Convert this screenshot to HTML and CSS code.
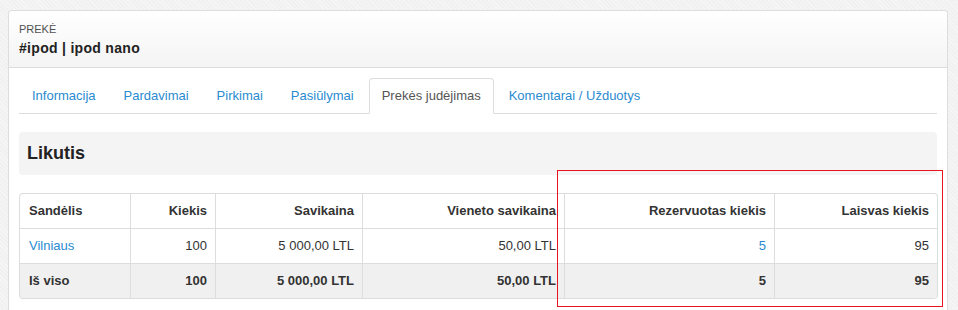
FILE: index.html
```html
<!DOCTYPE html>
<html lang="lt">

<head>
    <meta charset="UTF-8">
    <title>Prekė - ipod nano</title>
    <link rel="stylesheet" href="styles.css">
</head>

<body>
    <div class="panel">
        <div class="panel-heading">
            <div class="panel-label">Prekė</div>
            <div class="panel-title">#ipod | ipod nano</div>
        </div>
        <div class="panel-body">
            <ul class="tabs">
                <li><a href="#">Informacija</a></li>
                <li><a href="#">Pardavimai</a></li>
                <li><a href="#">Pirkimai</a></li>
                <li><a href="#">Pasiūlymai</a></li>
                <li class="active"><a href="#">Prekės judėjimas</a></li>
                <li><a href="#">Komentarai / Užduotys</a></li>
            </ul>

            <div class="well">
                <h3>Likutis</h3>
            </div>

            <table class="stock">
                <colgroup>
                    <col class="c1">
                    <col class="c2">
                    <col class="c3">
                    <col class="c4">
                    <col class="c5">
                    <col class="c6">
                </colgroup>
                <thead>
                    <tr>
                        <th>Sandėlis</th>
                        <th class="num">Kiekis</th>
                        <th class="num">Savikaina</th>
                        <th class="num">Vieneto savikaina</th>
                        <th class="num">Rezervuotas kiekis</th>
                        <th class="num">Laisvas kiekis</th>
                    </tr>
                </thead>
                <tbody>
                    <tr>
                        <td><a href="#">Vilniaus</a></td>
                        <td class="num">100</td>
                        <td class="num">5 000,00 LTL</td>
                        <td class="num">50,00 LTL</td>
                        <td class="num"><a href="#">5</a></td>
                        <td class="num">95</td>
                    </tr>
                    <tr class="total">
                        <td>Iš viso</td>
                        <td class="num">100</td>
                        <td class="num">5 000,00 LTL</td>
                        <td class="num">50,00 LTL</td>
                        <td class="num">5</td>
                        <td class="num">95</td>
                    </tr>
                </tbody>
            </table>
        </div>
    </div>

    <!-- pažymėta sritis -->
    <div class="highlight"></div>
</body>

</html>
```

FILE: styles.css
```css
body {
    margin: 10px 10px 0 8px;
    font-family: 'Liberation Sans', Arial, sans-serif;
    font-size: 13px;
    line-height: 18px;
    color: #333;
    background-color: #f1f1f1;
    background-image: repeating-linear-gradient(45deg, rgba(255, 255, 255, 0.35) 0 1px, transparent 1px 3px);
    overflow: hidden;
    height: 300px;
}

a {
    color: #2a8bd0;
    text-decoration: none;
}

.panel {
    width: 940px;
    box-sizing: border-box;
    background: #fff;
    border: 1px solid #ddd;
    border-bottom: none;
    border-radius: 4px 4px 0 0;
    height: 320px;
}

.panel-heading {
    padding: 9px 10px;
    background: linear-gradient(#ffffff, #f4f4f4);
    border-bottom: 1px solid #ddd;
    border-radius: 4px 4px 0 0;
}

.panel-label {
    font-size: 11px;
    line-height: 18px;
    text-transform: uppercase;
    color: #505050;
}

.panel-title {
    font-size: 14px;
    line-height: 20px;
    font-weight: bold;
    letter-spacing: 0.3px;
    color: #222;
}

.panel-body {
    padding: 10px;
}

.tabs {
    display: flex;
    list-style: none;
    margin: 0 0 18px;
    padding: 0;
    border-bottom: 1px solid #ddd;
}

.tabs li {
    margin-bottom: -1px;
    margin-right: 2px;
}

.tabs a {
    display: block;
    padding: 8px 12px;
    line-height: 18px;
    border: 1px solid transparent;
    border-radius: 4px 4px 0 0;
}

.tabs .active a {
    color: #555;
    background: #fff;
    border-color: #ddd #ddd transparent;
}

.well {
    background: #f4f4f4;
    border-radius: 4px;
    padding: 0 8px;
    margin-bottom: 18px;
}

.well h3 {
    margin: 0;
    font-size: 18px;
    line-height: 43px;
    color: #222;
}

.stock {
    width: 100%;
    table-layout: fixed;
    border-collapse: separate;
    border-spacing: 0;
    border: 1px solid #ddd;
    border-left: none;
    border-radius: 4px;
}

.c1 { width: 111px; }
.c2 { width: 85px; }
.c3 { width: 147px; }
.c4 { width: 202px; }
.c5 { width: 210px; }
.c6 { width: 163px; }

.stock th,
.stock td {
    padding: 8px 8px 8px 9px;
    line-height: 18px;
    border-left: 1px solid #ddd;
    border-top: 1px solid #ddd;
    text-align: left;
    white-space: nowrap;
    overflow: hidden;
}

.stock th {
    border-top: none;
    color: #333;
}

.stock .num {
    text-align: right;
}

.stock .total td {
    background: #f0f0f0;
    font-weight: bold;
    color: #333;
}

.stock tr:first-child th:first-child {
    border-top-left-radius: 4px;
}

.stock .total td:first-child {
    border-bottom-left-radius: 4px;
}

.stock .total td:last-child {
    border-bottom-right-radius: 4px;
}

.highlight {
    position: absolute;
    left: 557px;
    top: 170px;
    width: 386px;
    height: 137px;
    box-sizing: border-box;
    border: 1px solid #e8141b;
}
```
